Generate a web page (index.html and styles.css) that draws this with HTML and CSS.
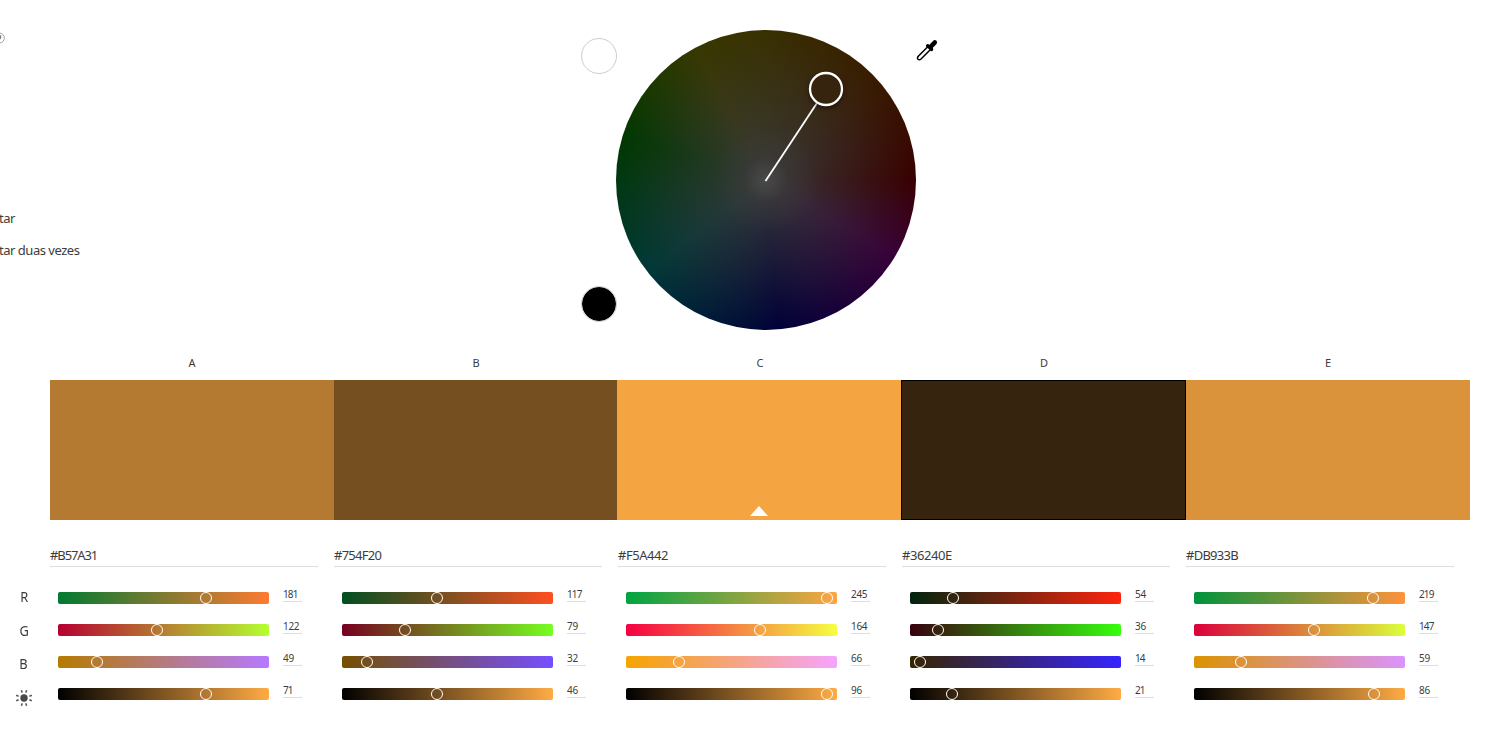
FILE: index.html
```html
<!DOCTYPE html>
<html lang="pt">
<head>
<meta charset="utf-8">
<title>Roda de cores</title>
<link rel="stylesheet" href="styles.css">
</head>
<body>
<main class="page">
  <section class="stage">
    <aside class="rules">
      <svg class="help" viewBox="0 0 6 12" width="6" height="12"><circle cx="-.7" cy="6" r="5" fill="none" stroke="#999" stroke-width=".9"/><path d="M0 3.200V5.500L-1 7" fill="none" stroke="#777" stroke-width="2.400"/></svg>
      <span class="rule rule-first">tar</span>
      <span class="rule">tar duas vezes</span>
    </aside>
    <div class="backdrops">
      <span class="dot dot-white"></span>
      <span class="dot dot-black"></span>
    </div>
    <div class="wheel">
      <svg class="marker" viewBox="0 0 300 300" width="300" height="300">
        <path d="M149.500 151L201 73" stroke="#fff" stroke-width="1.800"/>
        <circle class="marker-ring" cx="210" cy="59" r="16" fill="#36240E" stroke="#fff" stroke-width="2.300"/>
      </svg>
    </div>
    <svg class="picker" viewBox="0 0 22 22" width="22" height="22"><path d="M11.800 7.800L2.300 17.200Q.9 18.800 2 20.200Q3.400 21.400 5 20L14.500 10.500" fill="#fff" stroke="#000" stroke-width="1.500"/><path d="M10 6.300Q11 4.700 12.500 5.200L13.500 5.700L17 1.900Q18.700.3 20.500 1.700Q22 3.500 20.300 5.200L16.800 8.700Q18 10.500 16.500 12L15.200 12.300L10 7.400Z"/></svg>
  </section>

  <section class="letters"><span>A</span><span>B</span><span>C</span><span>D</span><span>E</span></section>
  <section class="swatches">
    <div class="swatch swatch-a"></div>
    <div class="swatch swatch-b"></div>
    <div class="swatch swatch-c"><svg class="base" viewBox="0 0 18 10" width="18" height="10"><path d="M9 0L18 10H0Z" fill="#fff"/></svg></div>
    <div class="swatch swatch-d"></div>
    <div class="swatch swatch-e"></div>
  </section>

  <section class="controls">
    <div class="channels">
      <span>R</span><span>G</span><span>B</span>
      <svg viewBox="0 0 18 18" width="18" height="18"><circle cx="9" cy="9" r="3.700" fill="#484848"/><path d="M7.300 3.600L6.300 1.200M10.700 3.600L11.700 1.200M14.400 7.300L16.800 6.300M14.400 10.700L16.800 11.700M10.700 14.400L11.700 16.800M7.300 14.400L6.300 16.800M3.600 10.700L1.200 11.700M3.600 7.300L1.200 6.300" stroke="#555" stroke-width="1.500"/></svg>
    </div>
    <div class="columns">
      <div class="column">
        <div class="hex hex-tight">#B57A31</div>
        <div class="row"><div class="track" style="--from:#007a31;--to:#ff7a31"><i class="knob" style="left:148px"></i></div><span class="value narrow">181</span></div>
        <div class="row"><div class="track" style="--from:#b50031;--to:#b5ff31"><i class="knob" style="left:99px"></i></div><span class="value">122</span></div>
        <div class="row"><div class="track" style="--from:#b57a00;--to:#b57aff"><i class="knob" style="left:39px"></i></div><span class="value">49</span></div>
        <div class="row"><div class="track" style="--from:#000;--to:#ffab44"><i class="knob" style="left:148px"></i></div><span class="value narrow">71</span></div>
      </div>
      <div class="column">
        <div class="hex">#754F20</div>
        <div class="row"><div class="track" style="--from:#004f20;--to:#ff4f20"><i class="knob" style="left:95px"></i></div><span class="value narrow">117</span></div>
        <div class="row"><div class="track" style="--from:#750020;--to:#75ff20"><i class="knob" style="left:63px"></i></div><span class="value">79</span></div>
        <div class="row"><div class="track" style="--from:#754f00;--to:#754fff"><i class="knob" style="left:25px"></i></div><span class="value">32</span></div>
        <div class="row"><div class="track" style="--from:#000;--to:#ffab44"><i class="knob" style="left:95px"></i></div><span class="value">46</span></div>
      </div>
      <div class="column">
        <div class="hex hex-wide">#F5A442</div>
        <div class="row"><div class="track" style="--from:#00a442;--to:#ffa442"><i class="knob" style="left:201px"></i></div><span class="value">245</span></div>
        <div class="row"><div class="track" style="--from:#f50042;--to:#f5ff42"><i class="knob" style="left:134px"></i></div><span class="value">164</span></div>
        <div class="row"><div class="track" style="--from:#f5a400;--to:#f5a4ff"><i class="knob" style="left:53px"></i></div><span class="value">66</span></div>
        <div class="row"><div class="track" style="--from:#000;--to:#ffab44"><i class="knob" style="left:201px"></i></div><span class="value">96</span></div>
      </div>
      <div class="column">
        <div class="hex hex-wide">#36240E</div>
        <div class="row"><div class="track" style="--from:#00240e;--to:#ff240e"><i class="knob" style="left:43px"></i></div><span class="value">54</span></div>
        <div class="row"><div class="track" style="--from:#36000e;--to:#36ff0e"><i class="knob" style="left:28px"></i></div><span class="value">36</span></div>
        <div class="row"><div class="track" style="--from:#362400;--to:#3624ff"><i class="knob" style="left:10px"></i></div><span class="value narrow">14</span></div>
        <div class="row"><div class="track" style="--from:#000;--to:#ffab44"><i class="knob" style="left:42px"></i></div><span class="value narrow">21</span></div>
      </div>
      <div class="column">
        <div class="hex">#DB933B</div>
        <div class="row"><div class="track" style="--from:#00933b;--to:#ff933b"><i class="knob" style="left:179px"></i></div><span class="value narrow">219</span></div>
        <div class="row"><div class="track" style="--from:#db003b;--to:#dbff3b"><i class="knob" style="left:120px"></i></div><span class="value narrow">147</span></div>
        <div class="row"><div class="track" style="--from:#db9300;--to:#db93ff"><i class="knob" style="left:47px"></i></div><span class="value">59</span></div>
        <div class="row"><div class="track" style="--from:#000;--to:#ffab44"><i class="knob" style="left:180px"></i></div><span class="value">86</span></div>
      </div>
    </div>
  </section>
</main>
</body>
</html>
```
FILE: styles.css
```css
* { box-sizing: border-box; }
body {
  margin: 0;
  background: #fff;
  color: #3c3c3c;
  font-family: "Noto Sans", "Open Sans", sans-serif;
  overflow: hidden;
}
svg { display: block; overflow: hidden; }
.page { width: 1509px; height: 736px; }

.stage { display: flex; height: 353px; }
.rules { width: 581px; padding-top: 32px; }
.rule {
  display: block;
  height: 32px;
  margin-left: -1px;
  font-size: 13px;
  line-height: 32px;
  letter-spacing: -.48px;
  white-space: nowrap;
}
.rule-first { margin-top: 158px; }
.backdrops { width: 35px; padding-top: 38px; }
.dot { display: block; width: 36px; height: 36px; border: 1px solid #ccc; border-radius: 50%; }
.dot-black { margin-top: 212px; background: #000; background-clip: padding-box; }
.wheel {
  width: 300px;
  height: 300px;
  margin-top: 30px;
  border-radius: 50%;
  background:
    radial-gradient(circle closest-side, rgba(76, 76, 76, .85), rgba(60, 60, 60, .4) 15%, rgba(56, 56, 56, 0) 35%),
    radial-gradient(circle closest-side, #383838, rgba(56, 56, 56, 0)),
    conic-gradient(#383000, #381c00 45deg, #380000 90deg, #380038 120deg, #000038 175deg, #003838 232deg, #003800 287deg, #383800 332deg, #383000);
}
.marker-ring { filter: drop-shadow(0 2px 2px rgba(0, 0, 0, .5)); }
.picker { margin: 39px 0 0 0; }

.letters, .swatches { display: grid; grid-template-columns: repeat(5, 284px); margin-left: 50px; }
.letters { height: 27px; font-size: 11px; line-height: 20px; text-align: center; }
.swatches { width: 1420px; height: 140px; }
.swatch-a { background: #b57a31; }
.swatch-b { background: #754f20; margin-right: 1px; }
.swatch-c {
  display: flex;
  align-items: flex-end;
  justify-content: center;
  margin: 0 1px 0 -1px;
  padding-bottom: 4px;
  background: #f5a442;
}
.swatch-d { margin-left: -1px; background: #36240e; border: 1px solid #000; }
.swatch-e { background: #db933b; }

.controls { display: flex; }
.channels {
  display: flex;
  flex-direction: column;
  align-items: center;
  width: 48px;
  padding-top: 60px;
  font-size: 14px;
}
.channels span { height: 33.500px; line-height: 33px; transform: scaleX(.92); }
.channels svg { margin-top: 8px; }
.columns { display: grid; grid-template-columns: repeat(5, 284px); margin-left: 2px; }
.hex {
  width: 268px;
  height: 47px;
  margin-bottom: 25px;
  padding-top: 25px;
  border-bottom: 1px solid #ddd;
  font-size: 13px;
  line-height: 20px;
  letter-spacing: -.75px;
}
.hex-tight { letter-spacing: -1.100px; }
.hex-wide { letter-spacing: -.45px; }
.row { display: flex; height: 32px; padding-left: 8px; }
.track {
  position: relative;
  width: 211px;
  height: 12px;
  border-radius: 2px;
  background: linear-gradient(90deg, var(--from), var(--to));
}
.knob {
  position: absolute;
  top: 0;
  width: 12px;
  height: 12px;
  margin-left: -6px;
  border: 1px solid #fff;
  border-radius: 50%;
}
.value {
  width: 19px;
  height: 16px;
  margin: -6px 0 0 14px;
  border-bottom: 1px solid #ddd;
  font-size: 10px;
  line-height: 16px;
  letter-spacing: -.3px;
}
.narrow { letter-spacing: -.9px; }
```
